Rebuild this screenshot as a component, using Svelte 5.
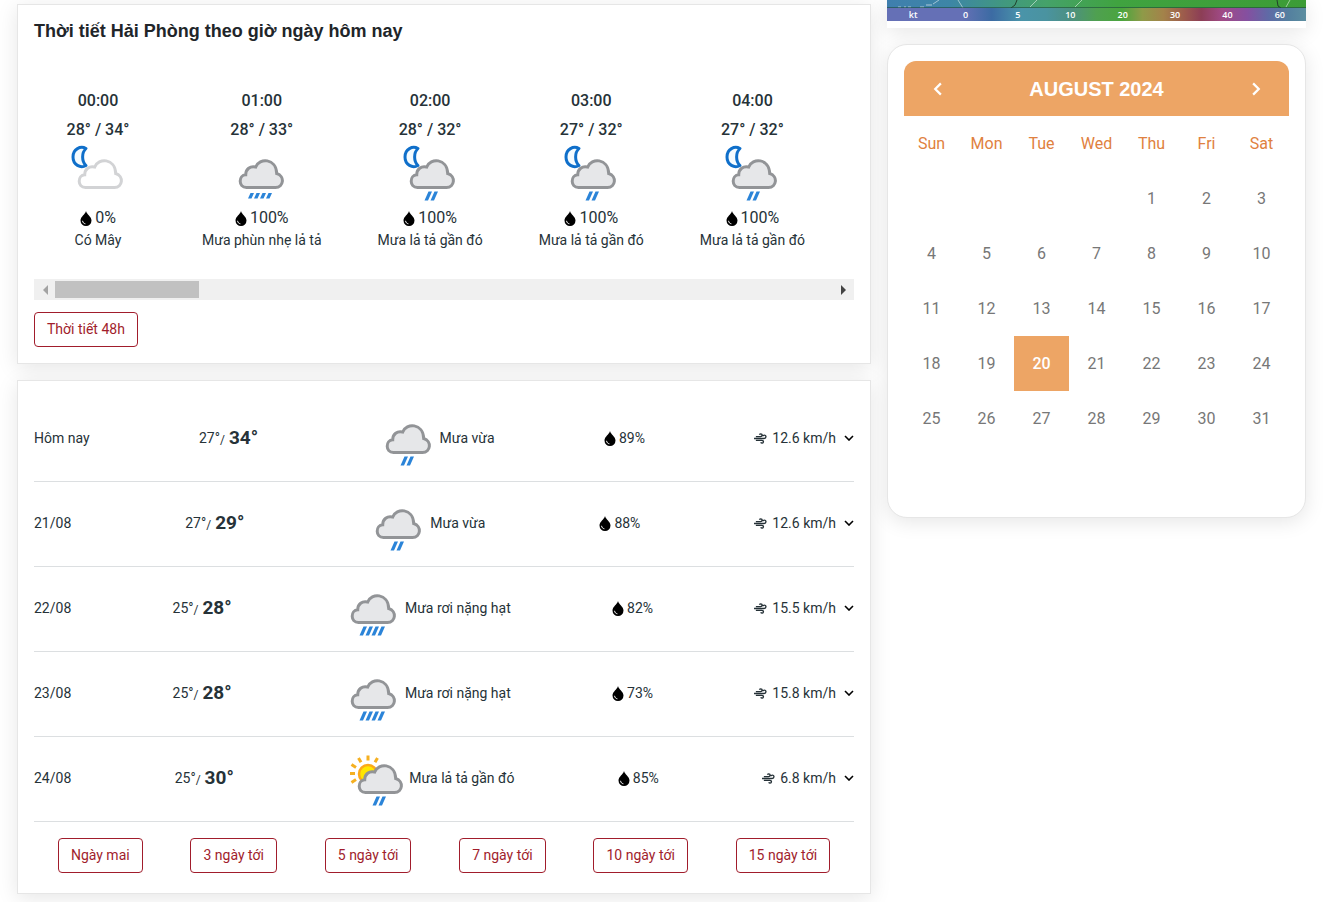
<script lang="ts">
  type Hour = { time: string; low: number; high: number; rain: string; text: string; icon: string };
  type Day = { date: string; low: number; high: number; icon: string; text: string; humidity: string; wind: string };

  const hours: Hour[] = [
    { time: '00:00', low: 28, high: 34, rain: '0%', text: 'Có Mây', icon: 'night-cloud' },
    { time: '01:00', low: 28, high: 33, rain: '100%', text: 'Mưa phùn nhẹ lả tả', icon: 'drizzle' },
    { time: '02:00', low: 28, high: 32, rain: '100%', text: 'Mưa lả tả gần đó', icon: 'night-rain' },
    { time: '03:00', low: 27, high: 32, rain: '100%', text: 'Mưa lả tả gần đó', icon: 'night-rain' },
    { time: '04:00', low: 27, high: 32, rain: '100%', text: 'Mưa lả tả gần đó', icon: 'night-rain' },
  ];

  const days: Day[] = [
    { date: 'Hôm nay', low: 27, high: 34, icon: 'rain', text: 'Mưa vừa', humidity: '89%', wind: '12.6 km/h' },
    { date: '21/08', low: 27, high: 29, icon: 'rain', text: 'Mưa vừa', humidity: '88%', wind: '12.6 km/h' },
    { date: '22/08', low: 25, high: 28, icon: 'heavy', text: 'Mưa rơi nặng hạt', humidity: '82%', wind: '15.5 km/h' },
    { date: '23/08', low: 25, high: 28, icon: 'heavy', text: 'Mưa rơi nặng hạt', humidity: '73%', wind: '15.8 km/h' },
    { date: '24/08', low: 25, high: 30, icon: 'sun-rain', text: 'Mưa lả tả gần đó', humidity: '85%', wind: '6.8 km/h' },
  ];

  const ranges = ['Ngày mai', '3 ngày tới', '5 ngày tới', '7 ngày tới', '10 ngày tới', '15 ngày tới'];
  const scale = ['kt', '0', '5', '10', '20', '30', '40', '60'];
  const weekdays = ['Sun', 'Mon', 'Tue', 'Wed', 'Thu', 'Fri', 'Sat'];
  const monthNames = [
    'January', 'February', 'March', 'April', 'May', 'June',
    'July', 'August', 'September', 'October', 'November', 'December',
  ];

  let year = $state(2024);
  let month = $state(7);
  let strip: HTMLElement;

  // always six rows so the card keeps its height between months
  let weeks = $derived.by(() => {
    const offset = new Date(year, month, 1).getDay();
    const total = new Date(year, month + 1, 0).getDate();
    return Array.from({ length: 6 }, (_, w) =>
      Array.from({ length: 7 }, (_, d) => {
        const n = w * 7 + d - offset + 1;
        return n > 0 && n <= total ? n : null;
      })
    );
  });

  function moveMonth(step: number) {
    const next = new Date(year, month + step, 1);
    year = next.getFullYear();
    month = next.getMonth();
  }

  function isToday(day: number | null) {
    return day === 20 && month === 7 && year === 2024;
  }

  function scrollHours(step: number) {
    strip.scrollBy({ left: step * 160, behavior: 'smooth' });
  }
</script>

{#snippet weatherIcon(kind: string, viewBox: string)}
  <svg class="weather-icon" {viewBox} aria-hidden="true">
    {#if kind === 'sun-rain'}
      <g stroke="#f5b021" stroke-width="3">
        <path d="M31 9.500v5M21.500 12l2.500 4.300M40.500 12l-2.500 4.300M14.500 18.500l4.500 3M13 27.500h5M14.500 36.500l4.500-3" />
      </g>
      <circle cx="31" cy="28" r="9" fill="#ffe600" stroke="#fba919" stroke-width="2.500" />
    {/if}
    {#if kind.startsWith('night')}
      <path d="M29 7.500c-5.500-3-13 .5-13 8.500s7.500 11.500 13 8.500c-4.500-4-4.500-13 0-17z" fill="#f4fbff" stroke="#0f6fca" stroke-width="3" stroke-linejoin="round" />
    {/if}
    <path
      class="cloud"
      class:pale={kind === 'night-cloud'}
      class:shifted={kind.includes('-')}
      d="M25.500 46.500c-8.500 0-8-12.500-.8-12.800c0-5.500 4.500-9.200 10-7.700c3.500-9.500 20.500-9 21 6.500c8.500 2.500 7 14-1.200 14z"
    />
    <g class:shifted={kind.includes('-')} fill="#2b84d8">
      {#if kind === 'drizzle'}
        <path d="M27 57.500h3.500l2.500-5.500h-3.500zM33 57.500h3.500l2.500-5.500h-3.500zM39 57.500h3.500l2.500-5.500h-3.500zM45 57.500h3.500l2.500-5.500h-3.500z" />
      {:else if kind === 'heavy'}
        <path d="M26.500 59.500h3.500l4-9h-3.500zM32.500 59.500h3.500l4-9h-3.500zM38.500 59.500h3.500l4-9h-3.500zM44.500 59.500h3.500l4-9h-3.500z" />
      {:else if kind !== 'night-cloud'}
        <path d="M32.500 59.500h3.500l4-9h-3.500zM38.500 59.500h3.500l4-9h-3.500z" />
      {/if}
    </g>
  </svg>
{/snippet}

{#snippet drop()}
  <svg class="drop" viewBox="0 0 12 15" aria-hidden="true">
    <path d="M6 0c.6 3.200 5.500 5.600 5.500 9.600a5.500 5.400 0 0 1-11 0c0-4 4.900-6.400 5.500-9.600z" />
    <path d="M2.600 9.800c.1 1.700 1.200 2.800 2.800 3" fill="none" stroke="#fff" />
  </svg>
{/snippet}

<main class="page">
  <div class="column">
    <section class="card">
      <h2 class="card-title">Thời tiết Hải Phòng theo giờ ngày hôm nay</h2>
      <ul class="hours" bind:this={strip}>
        {#each hours as hour}
          <li class="hour">
            <strong>{hour.time}</strong>
            <strong>{hour.low}° / {hour.high}°</strong>
            {@render weatherIcon(hour.icon, '9 3 64 62')}
            <span class="hour-rain">{@render drop()}{hour.rain}</span>
            <span class="hour-text">{hour.text}</span>
          </li>
        {/each}
      </ul>
      <div class="scrollbar">
        <button class="arrow" aria-label="Trước" onclick={() => scrollHours(-1)}>
          <svg viewBox="0 0 6 10"><path d="M6 0v10L1 5z" fill="#a3a3a3" /></svg>
        </button>
        <div class="track"><div class="thumb"></div></div>
        <button class="arrow" aria-label="Sau" onclick={() => scrollHours(1)}>
          <svg viewBox="0 0 6 10"><path d="M0 0v10l5-5z" fill="#444" /></svg>
        </button>
      </div>
      <a class="btn" href="#48h">Thời tiết 48h</a>
    </section>

    <section class="card forecast">
      {#each days as day}
        <div class="day">
          <span>{day.date}</span>
          <span class="temps">{day.low}°<span class="slash">/</span><b>{day.high}°</b></span>
          <span class="condition">{@render weatherIcon(day.icon, '0 0 64 64')}{day.text}</span>
          <span class="humidity">{@render drop()}{day.humidity}</span>
          <button class="wind">
            <svg class="wind-icon" viewBox="0 0 14 12" aria-hidden="true">
              <path d="M2 4.500h5c2.200 0 2.200-3 .3-3c-.8 0-1.200.4-1.400 1M0 6.500h10.800c2.800 0 2.600-3.600.3-3.600c-.9 0-1.400.5-1.500 1.200M2 8.500h6.500c2.300 0 2 3 .2 3c-.8 0-1.200-.4-1.400-1" />
            </svg>
            <span>{day.wind}</span>
            <svg class="chevron" viewBox="0 0 10 6" aria-hidden="true"><path d="M1 1l4 4 4-4" /></svg>
          </button>
        </div>
      {/each}
      <nav class="ranges">
        {#each ranges as range}
          <a class="btn" href="#forecast">{range}</a>
        {/each}
      </nav>
    </section>
  </div>

  <aside class="column">
    <div class="map">
      <svg class="map-view" viewBox="0 0 419 8" preserveAspectRatio="none" aria-hidden="true">
        <defs>
          <linearGradient id="land">
            <stop offset="0" stop-color="#3f7fae" />
            <stop offset="0.15" stop-color="#3d86a6" />
            <stop offset="0.28" stop-color="#41987f" />
            <stop offset="0.38" stop-color="#45a26a" />
            <stop offset="0.55" stop-color="#40a340" />
            <stop offset="1" stop-color="#3c9c36" />
          </linearGradient>
        </defs>
        <rect width="419" height="8" fill="url(#land)" />
        <path d="M71 0l5 8M150 0l-7 7M195 0l-7 7M403 0l-4 7M52 0l-6 4" stroke="#fff" stroke-opacity="0.5" fill="none" />
        <path d="M130 0l-2 5-4 3M390 0l1 6 3 2" stroke="#22402c" fill="none" />
        <path d="M11 7h3M17 7h2M21 7h3M33 7h4M39 5h6" stroke="#dfe8ee" stroke-opacity="0.7" />
        <path d="M0 7.500h419" stroke="#1f4a3c" stroke-opacity="0.6" />
      </svg>
      <div class="map-scale">
        {#each scale as mark}
          <span>{mark}</span>
        {/each}
      </div>
    </div>

    <section class="card calendar">
      <header class="calendar-head">
        <button aria-label="Previous month" onclick={() => moveMonth(-1)}>
          <svg viewBox="0 0 8 12"><path d="M7 1L2 6l5 5" /></svg>
        </button>
        <h2>{monthNames[month]} {year}</h2>
        <button aria-label="Next month" onclick={() => moveMonth(1)}>
          <svg viewBox="0 0 8 12"><path d="M1 1l5 5-5 5" /></svg>
        </button>
      </header>
      <table>
        <thead>
          <tr>
            {#each weekdays as name}
              <th>{name}</th>
            {/each}
          </tr>
        </thead>
        <tbody>
          {#each weeks as week}
            <tr>
              {#each week as day}
                <td class:today={isToday(day)}>{day ?? ''}</td>
              {/each}
            </tr>
          {/each}
        </tbody>
      </table>
    </section>
  </aside>
</main>

<style>
  :global(body) {
    margin: 0;
    background: #fff;
    color: #263238;
    font-family: Roboto, 'Liberation Sans', sans-serif;
    font-size: 14px;
    line-height: 20px;
  }

  .page {
    display: grid;
    grid-template-columns: minmax(0, 854fr) minmax(0, 419fr);
    gap: 16px;
    align-items: start;
    padding: 0 22px 8px 17px;
    overflow: hidden;
  }

  .column {
    display: flex;
    flex-direction: column;
    gap: 16px;
  }

  .column:first-child {
    padding-top: 4px;
  }

  .card {
    box-sizing: border-box;
    padding: 16px;
    border: 1px solid #e6e6e6;
    background: #fff;
    box-shadow: 0 4px 20px rgba(0, 0, 0, 0.1);
  }

  .card-title {
    margin: 0;
    color: #212529;
    font-family: 'Liberation Sans', sans-serif;
    font-size: 18px;
    font-weight: 700;
    line-height: 20px;
  }

  .hours {
    display: flex;
    gap: 56px;
    margin: 0;
    padding: 45px 16px 29px;
    overflow: hidden;
    list-style: none;
  }

  .hour {
    display: flex;
    flex: none;
    flex-direction: column;
    align-items: center;
    min-width: 96px;
  }

  .hour strong {
    font-size: 16px;
    font-weight: 500;
    line-height: 29px;
  }

  .weather-icon {
    flex: none;
    width: 64px;
    height: 64px;
    overflow: visible;
  }

  .hour .weather-icon {
    height: 62px;
  }

  .cloud {
    fill: #e6e7e9;
    stroke: #929497;
    stroke-width: 3;
  }

  .cloud.pale {
    fill: #fff;
    stroke: #d2d3d5;
  }

  .shifted {
    transform: translateX(3px);
  }

  .drop {
    flex: none;
    width: 12px;
    height: 15px;
  }

  .hour-rain {
    display: flex;
    align-items: center;
    gap: 3px;
    font-size: 16px;
    line-height: 24px;
  }

  .hour-text {
    line-height: 20px;
  }

  .scrollbar {
    display: flex;
    height: 21px;
    margin-bottom: 12px;
    background: #f0f0f0;
  }

  .arrow {
    display: grid;
    place-items: center;
    width: 21px;
    padding: 0;
    border: 0;
    background: none;
  }

  .arrow svg {
    width: 6px;
    height: 10px;
  }

  .track {
    flex: 1;
    padding: 2px 0;
  }

  .thumb {
    width: 18.5%;
    height: 100%;
    background: #c1c1c1;
  }

  .btn {
    display: inline-block;
    padding: 6px 12px;
    border: 1px solid #a11d2c;
    border-radius: 4px;
    color: #a11d2c;
    line-height: 21px;
    text-decoration: none;
  }

  .forecast {
    padding-top: 16px;
    padding-bottom: 20px;
  }

  .day {
    display: flex;
    align-items: center;
    justify-content: space-between;
    height: 82px;
    padding-bottom: 2px;
    border-bottom: 1px solid #dcdfe1;
  }

  .temps {
    display: flex;
    align-items: center;
  }

  .temps b {
    margin-left: 4px;
    font-size: 19px;
    font-weight: 700;
    line-height: 24px;
  }

  .slash {
    padding-top: 4px;
    font-size: 12px;
  }

  .condition {
    display: flex;
    align-items: center;
    gap: 8px;
  }

  .humidity {
    display: flex;
    align-items: center;
    gap: 3px;
  }

  .wind {
    display: flex;
    align-items: center;
    padding: 0;
    border: 0;
    background: none;
    color: inherit;
    font: inherit;
  }

  .wind svg {
    fill: none;
    stroke: #263238;
  }

  .wind-icon {
    width: 13px;
    height: 12px;
    margin-right: 5px;
    stroke-width: 1.5;
  }

  .wind .chevron {
    width: 10px;
    height: 6px;
    margin-left: 8px;
    stroke: #000;
    stroke-width: 1.6;
  }

  .ranges {
    display: flex;
    justify-content: space-around;
    padding-top: 16px;
  }

  .map {
    padding-bottom: 7px;
    background: #fff;
    box-shadow: 0 4px 20px rgba(0, 0, 0, 0.1);
  }

  .map-view {
    display: block;
    width: 100%;
    height: 8px;
  }

  .map-scale {
    display: grid;
    grid-template-columns: repeat(8, 1fr);
    background: linear-gradient(
      90deg,
      #6570b6 0%,
      #6570b6 18%,
      #3c6ba3 25%,
      #4a94a9 32%,
      #4a93a0 38%,
      #4d9080 44%,
      #4fa050 50%,
      #4aa53e 56%,
      #8f9a48 61%,
      #a3824a 66%,
      #9c5a4c 71%,
      #8c3e56 75%,
      #a04a86 80%,
      #8450a0 86%,
      #5f6aa6 91%,
      #54809f 96%,
      #5c8ea0 100%
    );
    color: #fff;
    font-family: 'Open Sans', 'Noto Sans', sans-serif;
    font-size: 9px;
    font-weight: 600;
    line-height: 13px;
    text-align: center;
  }

  .calendar {
    border-radius: 20px;
  }

  .calendar-head {
    display: flex;
    align-items: center;
    justify-content: space-between;
    height: 55px;
    padding: 0 23px;
    border-radius: 12px 12px 0 0;
    background: #eda565;
    color: #fff;
  }

  .calendar-head h2 {
    margin: 0;
    font-family: 'Liberation Sans', sans-serif;
    font-size: 20px;
    font-weight: 700;
    text-transform: uppercase;
  }

  .calendar-head button {
    display: grid;
    place-items: center;
    width: 20px;
    height: 20px;
    padding: 0;
    border: 0;
    background: none;
  }

  .calendar-head svg {
    width: 9px;
    height: 14px;
    fill: none;
    stroke: #fff;
    stroke-width: 2;
  }

  table {
    width: 100%;
    border-collapse: collapse;
    table-layout: fixed;
    font-size: 16px;
    text-align: center;
  }

  th,
  td {
    height: 55px;
    padding: 0;
  }

  th {
    color: #df8140;
    font-weight: 400;
  }

  td {
    color: #777;
  }

  td.today {
    background: #eda565;
    color: #fff;
    font-weight: 500;
  }
</style>
